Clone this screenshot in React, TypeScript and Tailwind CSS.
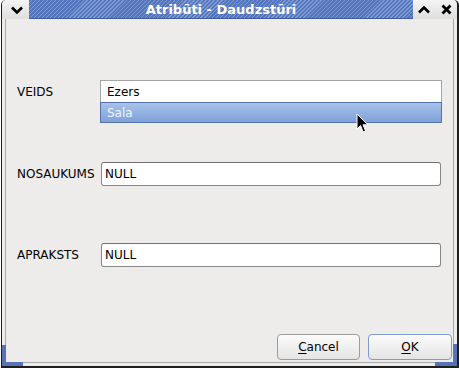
import React from "react";

const font = { fontFamily: '"DejaVu Sans", "Liberation Sans", sans-serif' };

function ChevronDown() {
  return (
    <svg width="12" height="8" viewBox="0 0 12 8">
      <path d="M1 1.5 L6 6.5 L11 1.5" stroke="#000" strokeWidth="2.6" fill="none" strokeLinejoin="miter" />
    </svg>
  );
}
function ChevronUp() {
  return (
    <svg width="12" height="8" viewBox="0 0 12 8">
      <path d="M1 6.5 L6 1.5 L11 6.5" stroke="#000" strokeWidth="2.6" fill="none" strokeLinejoin="miter" />
    </svg>
  );
}
function CloseX() {
  return (
    <svg width="11" height="11" viewBox="0 0 11 11">
      <path d="M1.5 1.5 L9.5 9.5 M9.5 1.5 L1.5 9.5" stroke="#000" strokeWidth="2.8" fill="none" />
    </svg>
  );
}

function Cursor() {
  return (
    <svg width="14" height="21" viewBox="0 0 14 21">
      <path
        d="M1 1 L1 16 L4.5 12.5 L7.2 19 L9.6 18 L7 11.8 L12 11.8 Z"
        fill="#000"
        stroke="#fff"
        strokeWidth="1"
        strokeLinejoin="round"
      />
    </svg>
  );
}

export default function App() {
  return (
    <div className="w-[459px] h-[368px] bg-white pl-px" style={font}>
      <div className="relative w-[458px] h-[368px] flex flex-col border-l border-r-2 border-b-2 border-[#1e1e1e] rounded-tl-[5px] rounded-tr-[5px] bg-[#edeceb]">
        {/* title bar */}
        <div className="flex h-[19px] shrink-0">
          <div className="w-[27px] h-full flex items-center justify-center pl-[2px] bg-[linear-gradient(#f4f4f4,#dedede)] rounded-tl-[5px]">
            <ChevronDown />
          </div>
          <div className="flex-1 h-full flex items-center justify-center border-b border-[#3d5da0] bg-[repeating-linear-gradient(135deg,#5474bc_0px,#5474bc_1.8px,#7f9bd6_1.8px,#7f9bd6_2.8px)]">
            <span className="text-white font-bold text-[13px] leading-none">Atribūti - Daudzstūri</span>
          </div>
          <div className="w-[22px] h-full flex items-center justify-center bg-[linear-gradient(#f4f4f4,#dedede)]">
            <ChevronUp />
          </div>
          <div className="w-[22px] h-full flex items-center justify-center bg-[linear-gradient(#f4f4f4,#dedede)] rounded-tr-[5px]">
            <CloseX />
          </div>
        </div>

        {/* frame body */}
        <div className="flex-1 pl-[3px] pr-[3px] pb-[3px] flex">
          <div className="flex-1 flex flex-col border-l border-r border-b border-[#a9a9a9] text-[12px] text-black">
            {/* VEIDS */}
            <div className="flex mt-[61px] h-[43px]">
              <div className="w-[94px] pl-[11px] pt-[5px] leading-[14px]">VEIDS</div>
              <div className="w-[342px] flex flex-col">
                <div className="h-[22px] border-t border-l border-r border-[#a5a5a5] bg-white pl-[6px] flex items-center leading-none">
                  Ezers
                </div>
                <div className="h-[21px] border border-[#5373ad] bg-[linear-gradient(#a8c3ea,#7fa1d8)] pl-[6px] flex items-center text-[#eef3fb] leading-none">
                  Sala
                </div>
              </div>
            </div>

            {/* NOSAUKUMS */}
            <div className="flex mt-[39px] h-[24px] items-center">
              <div className="w-[95px] pl-[11px] leading-none">NOSAUKUMS</div>
              <div className="w-[340px] h-[24px] rounded-[3px] border border-[#868686] border-t-[#6f6f6f] bg-white pl-[3px] flex items-center leading-none">
                NULL
              </div>
            </div>

            {/* APRAKSTS */}
            <div className="flex mt-[57px] h-[24px] items-center">
              <div className="w-[95px] pl-[11px] leading-none">APRAKSTS</div>
              <div className="w-[340px] h-[24px] rounded-[3px] border border-[#868686] border-t-[#6f6f6f] bg-white pl-[3px] flex items-center leading-none">
                NULL
              </div>
            </div>

            {/* buttons */}
            <div className="flex justify-end gap-[8px] mt-[67px] pr-[1px]">
              <button className="w-[83px] h-[26px] rounded-[4px] border border-[#9b9b9b] bg-[linear-gradient(#fbfbfb,#e4e4e4)] flex items-center justify-center leading-none">
                <span>
                  <span className="underline underline-offset-2">C</span>ancel
                </span>
              </button>
              <button className="w-[84px] h-[26px] rounded-[4px] border border-[#7e9ccf] bg-[linear-gradient(#fbfbfb,#e4e4e4)] flex items-center justify-center leading-none">
                <span>
                  <span className="underline underline-offset-2">O</span>K
                </span>
              </button>
            </div>
          </div>
        </div>

        {/* blue resize corners */}
        <div className="absolute left-0 bottom-0 w-[21px] h-[21px] border-l-4 border-b-4 border-[#5673b8]" />
        <div className="absolute right-0 bottom-0 w-[22px] h-[22px] border-r-4 border-b-4 border-[#5673b8]" />

        {/* mouse cursor */}
        <div className="absolute left-[354px] top-[113px]">
          <Cursor />
        </div>
      </div>
    </div>
  );
}
